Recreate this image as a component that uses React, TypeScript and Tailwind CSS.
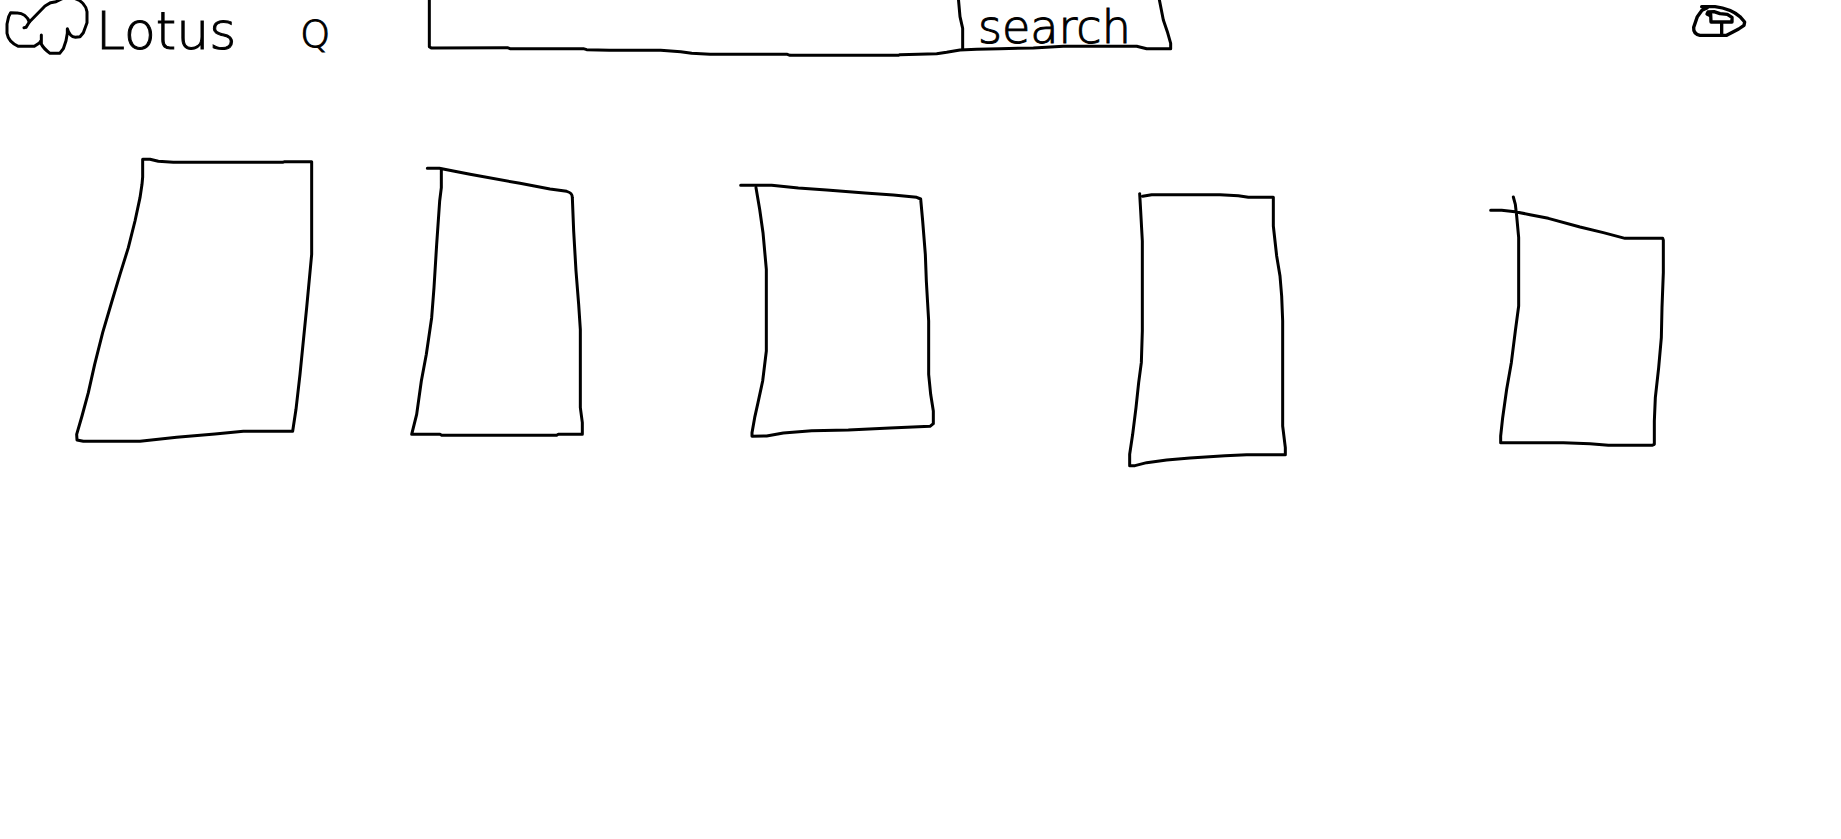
const cards = [
  {
    name: "Item 1",
    viewBox: "36 36 744 960",
    path: "M248 108V55L270 55L295 61L340 64H668L674 62H755V340L740 500L725 650L720 700L708 805L698 871H550L465 879L350 889L240 901H70L51 897L50 880L66 825L85 755L104 670L128 575L156 480L180 400L205 320L225 240L240 170L246 130Z",
  },
  {
    name: "Item 2",
    viewBox: "54 6 744 960",
    path: "M112 52H148L190 60L240 70L390 97L480 114L530 121C542 124 547 128 547 140L551 240L558 360L566 460L571 535V770L577 815V850H505L500 853H155L150 850H65L80 790L94 690L109 610L125 500L132 410L140 280L149 150L154 110V58",
  },
  {
    name: "Item 3",
    viewBox: "54 -54 744 960",
    path: "M62 43H155L235 51L320 57L435 66L520 72L590 79L602 84L608 150L616 250L619 330L626 450V610L632 670L640 720V758L630 766L510 771L385 777L275 779L190 786L140 795L96 796V785L104 740L114 695L128 630L139 540V295L129 185L119 115L108 50",
  },
  {
    name: "Item 4",
    viewBox: "48 -84 744 960",
    path: "M98 46L125 41H330L385 44L415 49H490V135L500 225L510 285L515 345L518 420V735L526 800V821H410L345 824L240 831L170 837L110 845L75 854H59V820L68 760L78 680L86 605L94 545L97 450V180L92 90L89 38",
  },
  {
    name: "Item 5",
    viewBox: "51 -84 744 960",
    path: "M62 88H95L135 92L180 101L235 112L330 138L400 155L465 172H578L580 178V275L576 380L574 470L566 560L556 650L553 720V790L546 793H415L360 788L280 785H92V765L98 710L110 625L124 545L136 450L146 375V170L140 105L136 70L130 48",
  },
];

function LotusMark() {
  return (
    <svg viewBox="0 0 288 180" className="h-[60px] w-24 shrink-0" fill="none" stroke="black" strokeWidth="9" strokeLinecap="round" strokeLinejoin="round" aria-hidden="true">
      <path d="M72 83L78 82L88 66C83 50 68 38 50 39L32 38L26 50L21 72V100C24 118 38 132 55 139H103L118 129L124 120V105V132C130 145 142 154 150 160H179L190 146L198 122L202 100V86C206 100 215 111 226 112L240 110L250 98L261 68V35C258 18 245 2 225 -4" />
      <path d="M88 66L135 18L152 8L168 5L185 -3" />
    </svg>
  );
}

function SearchFrame() {
  return (
    <svg viewBox="78 0 2250 180" preserveAspectRatio="none" className="pointer-events-none absolute inset-0 h-full w-full" fill="none" stroke="black" strokeWidth="3" strokeLinecap="round" strokeLinejoin="round" aria-hidden="true">
      <path vectorEffect="non-scaling-stroke" d="M88 -6V140L94 144L322 143L330 146H550L560 149L628 151H782L842 155L875 160L930 163H1162L1170 166H1495L1500 164L1610 161L1640 157L1680 150L1730 148L1800 146L1900 144L1990 139H2210L2240 146H2312V130L2302 95L2290 60L2277 -6" />
      <path vectorEffect="non-scaling-stroke" d="M1675 -6L1680 50L1688 85V148" />
    </svg>
  );
}

function ProfileMark() {
  return (
    <svg viewBox="54 0 180 120" className="h-10 w-[60px]" fill="none" stroke="black" strokeWidth="10" strokeLinecap="round" strokeLinejoin="round" aria-hidden="true">
      <path d="M95 20H135C165 24 195 37 210 50L224 66L222 76L206 87L170 106H90C76 103 70 95 71 82L82 50L96 31L112 23" />
      <path d="M120 47L111 42L114 36L132 35L150 41L172 43L186 52V66H123L122 43M155 67V106" />
    </svg>
  );
}

export default function App() {
  return (
    <div className="min-h-screen bg-white font-['DejaVu_Sans',sans-serif] font-extralight text-black [-webkit-text-stroke:1px_black]">
      <header className="grid grid-cols-[426fr_750fr_665fr]">
        <a href="#" className="flex h-[62px] items-start" aria-label="Lotus Q">
          <LotusMark />
          <span className="text-[52px] leading-[62px]">Lotus</span>
          <span className="ml-16 text-[38px] leading-[68px]">Q</span>
        </a>
        <form role="search" className="relative grid h-[60px] grid-cols-[540fr_210fr]" onSubmit={(e) => e.preventDefault()}>
          <input type="search" aria-label="Search" className="min-w-0 bg-transparent px-4 pb-2 text-3xl outline-none" />
          <button type="submit" className="self-start pl-3 text-left text-[46px] leading-[54px]">
            search
          </button>
          <SearchFrame />
        </form>
        <button type="button" aria-label="Profile" className="mr-[93px] self-start justify-self-end">
          <ProfileMark />
        </button>
      </header>
      <main className="grid grid-cols-[336fr_330fr_388fr_361fr_354fr] pt-[91px] pl-[72px]">
        {cards.map((card) => (
          <article key={card.name} aria-label={card.name}>
            <svg viewBox={card.viewBox} className="h-80 w-[248px]" fill="none" stroke="black" strokeWidth="9" strokeLinecap="round" strokeLinejoin="round" aria-hidden="true">
              <path d={card.path} />
            </svg>
          </article>
        ))}
      </main>
    </div>
  );
}
